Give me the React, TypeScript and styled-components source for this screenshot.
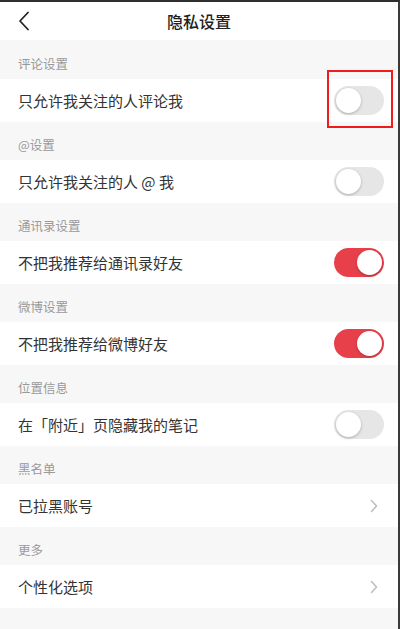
import React from 'react';
import styled, { createGlobalStyle } from 'styled-components';

const GlobalStyle = createGlobalStyle`
  html, body {
    margin: 0;
    padding: 0;
    background: #f7f7f7;
  }
  body {
    font-family: "Noto Sans CJK SC", "Noto Sans", sans-serif;
  }
`;

const Page = styled.div`
  width: 400px;
  height: 629px;
  box-sizing: border-box;
  border-top: 2px solid #2e2e2e;
  border-right: 2px solid #3a3a3a;
  background: #f7f7f7;
  overflow: hidden;
`;

const Header = styled.div`
  height: 38px;
  display: flex;
  align-items: center;
  justify-content: center;
  position: relative;
  background: #fff;
`;

const BackButton = styled.div`
  position: absolute;
  left: 14px;
  top: 8px;
  width: 20px;
  height: 22px;
  display: flex;
  align-items: center;
  justify-content: center;
`;

const Title = styled.div`
  font-size: 16px;
  font-weight: 500;
  color: #222;
`;

const SectionLabel = styled.div<{ $first?: boolean }>`
  height: ${(p) => (p.$first ? 39 : 38)}px;
  box-sizing: border-box;
  padding: ${(p) => (p.$first ? 16 : 15)}px 18px 0;
  font-size: 12.5px;
  line-height: 16px;
  color: #999;
`;

const Row = styled.div`
  height: 43px;
  display: flex;
  align-items: center;
  justify-content: space-between;
  padding: 0 14px 0 18px;
  background: #fff;
`;

const RowText = styled.div`
  font-size: 15px;
  color: #333;
`;

const ToggleWrap = styled.div`
  position: relative;
  display: flex;
`;

const Track = styled.div<{ $on: boolean }>`
  width: 50px;
  height: 29px;
  border-radius: 15px;
  box-sizing: border-box;
  background: ${(p) => (p.$on ? '#e8404b' : '#e6e6e6')};
  position: relative;
`;

const Knob = styled.div<{ $on: boolean }>`
  position: absolute;
  top: 2px;
  left: ${(p) => (p.$on ? 23 : 2)}px;
  width: 25px;
  height: 25px;
  border-radius: 50%;
  background: #fff;
  box-shadow: 0 1px 3px rgba(0, 0, 0, 0.25);
`;

const Highlight = styled.div`
  position: absolute;
  left: -7px;
  top: -16px;
  width: 66px;
  height: 58px;
  box-sizing: border-box;
  border: 2px solid #f21b1b;
`;

const Chevron = styled.div`
  width: 10px;
  display: flex;
  margin-right: 4px;
`;

const Toggle = ({ on, marked }: { on: boolean; marked?: boolean }) => (
  <ToggleWrap>
    <Track $on={on}>
      <Knob $on={on} />
    </Track>
    {marked && <Highlight />}
  </ToggleWrap>
);

type Item = {
  label: string;
  text: string;
  kind: 'toggle' | 'link';
  on?: boolean;
  marked?: boolean;
};

const items: Item[] = [
  { label: '评论设置', text: '只允许我关注的人评论我', kind: 'toggle', on: false, marked: true },
  { label: '@设置', text: '只允许我关注的人 @ 我', kind: 'toggle', on: false },
  { label: '通讯录设置', text: '不把我推荐给通讯录好友', kind: 'toggle', on: true },
  { label: '微博设置', text: '不把我推荐给微博好友', kind: 'toggle', on: true },
  { label: '位置信息', text: '在「附近」页隐藏我的笔记', kind: 'toggle', on: false },
  { label: '黑名单', text: '已拉黑账号', kind: 'link' },
  { label: '更多', text: '个性化选项', kind: 'link' },
];

export default function App() {
  return (
    <>
      <GlobalStyle />
      <Page>
        <Header>
          <BackButton>
            <svg width="12" height="20" viewBox="0 0 12 20">
              <path d="M10 1.5 L2 10 L10 18.5" fill="none" stroke="#222" strokeWidth="1.8" strokeLinecap="round" strokeLinejoin="round" />
            </svg>
          </BackButton>
          <Title>隐私设置</Title>
        </Header>
        {items.map((it, i) => (
          <React.Fragment key={it.label}>
            <SectionLabel $first={i === 0}>{it.label}</SectionLabel>
            <Row>
              <RowText>{it.text}</RowText>
              {it.kind === 'toggle' ? (
                <Toggle on={!!it.on} marked={it.marked} />
              ) : (
                <Chevron>
                  <svg width="8" height="14" viewBox="0 0 8 14">
                    <path d="M1.5 1.5 L6.5 7 L1.5 12.5" fill="none" stroke="#bdbdbd" strokeWidth="1.5" strokeLinecap="round" strokeLinejoin="round" />
                  </svg>
                </Chevron>
              )}
            </Row>
          </React.Fragment>
        ))}
      </Page>
    </>
  );
}
